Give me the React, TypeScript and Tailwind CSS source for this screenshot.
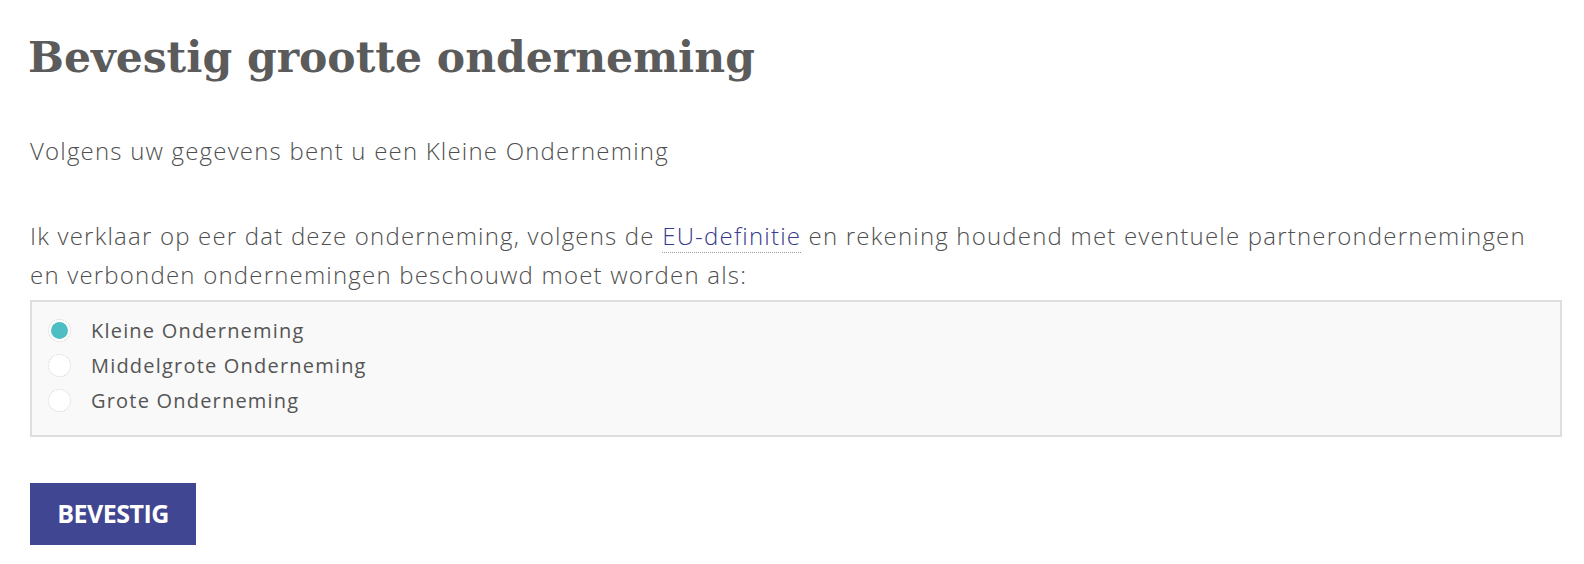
import { useState } from 'react'

const options = ['Kleine Onderneming', 'Middelgrote Onderneming', 'Grote Onderneming']

export default function App() {
  const [selected, setSelected] = useState(0)

  return (
    <div className="min-h-screen bg-white pl-[30px] pr-[22px] pt-[25px] text-[#505050]">
      {/* Heading */}
      <h1 className="m-0 -ml-[2px] font-['DejaVu_Serif',serif] text-[42.5px] font-bold leading-[64px] text-[#5b5b5b]">
        Bevestig grootte onderneming
      </h1>

      <div className="pr-[10px] font-['Open_Sans',sans-serif] text-[24px] font-light tracking-[1.2px] text-[#4f4f4f]">
        <p className="mt-[42px] leading-[40px]">Volgens uw gegevens bent u een Kleine Onderneming</p>

        <p className="mt-[45px] leading-[39px]">
          Ik verklaar op eer dat deze onderneming, volgens de{' '}
          <a
            href="#"
            className="text-[#363a8c] no-underline border-b border-dotted border-[#999]"
          >
            EU-definitie
          </a>{' '}
          en rekening houdend met eventuele partnerondernemingen en verbonden ondernemingen
          beschouwd moet worden als:
        </p>
      </div>

      {/* Options */}
      <div className="mt-[6px] border-2 border-[#dedede] bg-[#f9f9f9] px-[16px] pt-[11px] pb-[17px]">
        {options.map((label, i) => (
          <label
            key={label}
            className="flex h-[35px] cursor-pointer items-center gap-[20px]"
            onClick={() => setSelected(i)}
          >
            <span className="flex h-[23px] w-[23px] shrink-0 items-center justify-center rounded-full border border-dotted border-[#d4d4d4] bg-white">
              {selected === i && <span className="h-[17px] w-[17px] rounded-full bg-[#4dbfc4]" />}
            </span>
            <span className="font-['Open_Sans',sans-serif] text-[20px] tracking-[1.2px] text-[#555]">
              {label}
            </span>
          </label>
        ))}
      </div>

      <button
        type="button"
        className="mt-[46px] h-[62px] w-[166px] bg-[#414692] font-['Open_Sans',sans-serif] text-[25px] font-bold tracking-[-0.5px] text-white"
      >
        BEVESTIG
      </button>
    </div>
  )
}
